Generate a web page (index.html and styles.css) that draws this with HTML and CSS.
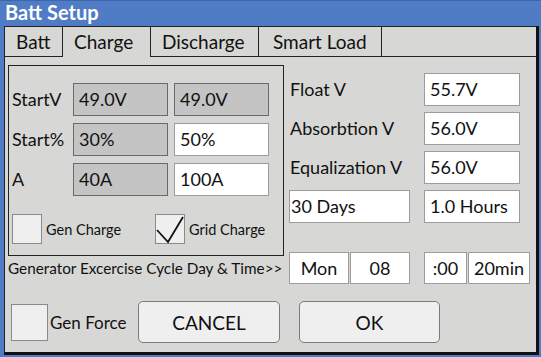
FILE: index.html
```html
<!DOCTYPE html>
<html lang="en">
<head>
  <meta charset="UTF-8" />
  <meta name="viewport" content="width=device-width, initial-scale=1.0" />
  <title>Batt Setup</title>
  <link rel="stylesheet" href="styles.css">
</head>
<body>
  <div class="window">
    <!-- Title Bar -->
    <div class="titlebar">Batt Setup</div>

    <div class="panel">
      <!-- Tabs -->
      <div class="tabs">
        <div class="tab tab-batt">Batt</div>
        <div class="tab tab-charge active">Charge</div>
        <div class="tab tab-discharge">Discharge</div>
        <div class="tab tab-smart">Smart Load</div>
        <div class="tab-fill"></div>
      </div>

      <div class="content">
        <div class="top">
          <!-- Start conditions -->
          <div class="group">
            <div class="start-row">
              <div class="label start-label">StartV</div>
              <div class="field start-field locked">49.0V</div>
              <div class="field start-field locked">49.0V</div>
            </div>
            <div class="start-row">
              <div class="label start-label">Start%</div>
              <div class="field start-field locked">30%</div>
              <div class="field start-field">50%</div>
            </div>
            <div class="start-row">
              <div class="label start-label">A</div>
              <div class="field start-field locked">40A</div>
              <div class="field start-field">100A</div>
            </div>

            <div class="checks">
              <div class="check-item gen-charge">
                <div class="checkbox"></div>
                <span>Gen Charge</span>
              </div>
              <div class="check-item">
                <div class="checkbox">
                  <svg width="30" height="30" viewBox="0 0 30 30">
                    <polyline points="2,16 13,28 28,3" fill="none" stroke="#111" stroke-width="1.8" />
                  </svg>
                </div>
                <span>Grid Charge</span>
              </div>
            </div>
          </div>

          <!-- Charge levels -->
          <div class="levels">
            <div class="label">Float V</div>
            <div class="field">55.7V</div>

            <div class="label">Absorbtion V</div>
            <div class="field">56.0V</div>

            <div class="label">Equalization V</div>
            <div class="field">56.0V</div>

            <div class="field days">30 Days</div>
            <div class="field">1.0 Hours</div>
          </div>
        </div>

        <!-- Generator exercise -->
        <div class="gen-row">
          <div class="gen-label">Generator Excercise Cycle Day &amp; Time&gt;&gt;</div>
          <div class="field center gen-day">Mon</div>
          <div class="field center gen-hour">08</div>
          <div class="field center gen-min">:00</div>
          <div class="field center gen-len">20min</div>
        </div>

        <!-- Actions -->
        <div class="actions">
          <div class="check-item gen-force">
            <div class="checkbox big"></div>
            <span>Gen Force</span>
          </div>
          <button class="btn btn-cancel">CANCEL</button>
          <button class="btn btn-ok">OK</button>
        </div>
      </div>
    </div>
  </div>
</body>
</html>
```

FILE: styles.css
```css
body {
  margin: 0;
  padding: 0;
  font-family: Lato, "Open Sans", sans-serif;
  color: #111;
}

/* Window frame */
.window {
  width: 541px;
  height: 357px;
  box-sizing: border-box;
  background-color: #4f7cc4;
  border-top: 1px solid #3d66ab;
  padding: 0 2px 2px 4px;
  display: flex;
  flex-direction: column;
}

.titlebar {
  height: 25px;
  flex: none;
  color: #fff;
  font-weight: bold;
  font-size: 20px;
  line-height: 23px;
  padding-left: 1px;
}

.panel {
  flex: 1;
  background-color: #d7d7d5;
  border-top: 1px solid #222;
  border-left: 1px solid #222;
  border-right: 3px solid #111;
  border-bottom: 3px solid #111;
}

/* Tabs */
.tabs {
  display: flex;
  height: 30px;
}

.tab {
  box-sizing: border-box;
  height: 30px;
  border-right: 1px solid #222;
  border-bottom: 1px solid #222;
  font-size: 19px;
  line-height: 30px;
  padding-left: 11px;
}

.tab.active {
  border-bottom: none;
}

.tab-batt { width: 58px; }
.tab-charge { width: 88px; }
.tab-discharge { width: 108px; }
.tab-smart { width: 123px; padding-left: 14px; }

.tab-fill {
  flex: 1;
  border-bottom: 1px solid #222;
}

/* Content */
.content {
  padding: 8px 0 0 3px;
}

.top {
  display: flex;
  gap: 5px;
  align-items: flex-start;
}

.group {
  box-sizing: border-box;
  width: 276px;
  height: 191px;
  border: 1px solid #222;
  padding: 17px 0 0 3px;
}

.start-row {
  display: flex;
  gap: 6px;
  height: 33px;
  margin-bottom: 7px;
}

.start-label {
  width: 55px;
  flex: none;
}

.start-field {
  width: 95px;
  flex: none;
}

.label {
  font-size: 18px;
  line-height: 33px;
  white-space: nowrap;
}

.field {
  box-sizing: border-box;
  height: 33px;
  background-color: #fff;
  border: 1px solid #9c9c9c;
  font-size: 18px;
  line-height: 31px;
  padding-left: 5px;
  white-space: nowrap;
}

.field.locked {
  background-color: #c4c4c4;
  border-color: #6a6a6a;
}

.field.center {
  text-align: center;
  padding-left: 0;
}

.checks {
  display: flex;
  align-items: center;
  margin-top: 18px;
}

.check-item {
  display: flex;
  align-items: center;
  gap: 4px;
  font-size: 14.5px;
}

.check-item.gen-charge {
  width: 143px;
}

.checkbox {
  box-sizing: border-box;
  width: 30px;
  height: 30px;
  background-color: #efefef;
  border: 1px solid #8a8a8a;
}

.checkbox svg {
  display: block;
  margin: -1px;
}

/* Right column */
.levels {
  margin-top: 8px;
  display: grid;
  grid-template-columns: 135px 96px;
  grid-auto-rows: 33px;
  row-gap: 6px;
}

.levels .label {
  padding-left: 1px;
}

.field.days {
  width: 121px;
  padding-left: 1px;
}

/* Generator row */
.gen-row {
  display: flex;
  align-items: center;
  margin-top: -4px;
  height: 32px;
}

.gen-label {
  width: 281px;
  flex: none;
  font-size: 15.3px;
  white-space: nowrap;
}

.gen-row .field {
  height: 32px;
  line-height: 30px;
  flex: none;
}

.gen-day { width: 60px; margin-right: 1px; }
.gen-hour { width: 60px; margin-right: 14px; }
.gen-min { width: 43px; margin-right: 1px; }
.gen-len { width: 62px; }

/* Action row */
.actions {
  display: flex;
  align-items: center;
  margin-top: 17px;
  padding-left: 3px;
}

.check-item.gen-force {
  width: 127px;
  gap: 2px;
  font-size: 17px;
}

.checkbox.big {
  width: 37px;
  height: 37px;
}

.btn {
  height: 42px;
  background-color: #efefef;
  border: 1px solid #7a7a7a;
  border-radius: 5px;
  font-family: Lato, "Open Sans", sans-serif;
  font-size: 19px;
  color: #111;
  padding: 0;
}

.btn-cancel {
  width: 142px;
  margin-right: 19px;
}

.btn-ok {
  width: 141px;
}
```
